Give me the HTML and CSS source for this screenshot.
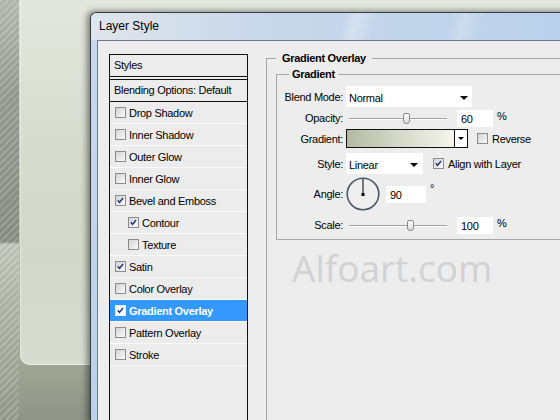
FILE: index.html
```html
<!DOCTYPE html>
<html>
<head>
    <title>Layer Style</title>
    <meta charset="UTF-8">
    <link rel="stylesheet" href="styles.css">
</head>
<body>
    <div class="screen">
        <div class="desk">
            <div class="desk-stripes"></div>
            <div class="desk-main">
                <div class="desk-panel"></div>
            </div>
        </div>

        <div class="window">
            <div class="titlebar">Layer Style</div>
            <div class="frame">
                <div class="client">
                    <div class="styles-list">
                        <div class="list-head">Styles</div>
                        <div class="list-blend">Blending Options: Default</div>
                        <div class="list-item"><span class="cb"></span>Drop Shadow</div>
                        <div class="list-item"><span class="cb"></span>Inner Shadow</div>
                        <div class="list-item"><span class="cb"></span>Outer Glow</div>
                        <div class="list-item"><span class="cb"></span>Inner Glow</div>
                        <div class="list-item"><span class="cb checked"><svg viewBox="0 0 11 11"><path d="M2.2 5.2 L4.3 7.8 L8.6 2.4"/></svg></span>Bevel and Emboss</div>
                        <div class="list-item sub"><span class="cb checked"><svg viewBox="0 0 11 11"><path d="M2.2 5.2 L4.3 7.8 L8.6 2.4"/></svg></span>Contour</div>
                        <div class="list-item sub"><span class="cb"></span>Texture</div>
                        <div class="list-item"><span class="cb checked"><svg viewBox="0 0 11 11"><path d="M2.2 5.2 L4.3 7.8 L8.6 2.4"/></svg></span>Satin</div>
                        <div class="list-item"><span class="cb"></span>Color Overlay</div>
                        <div class="list-item active"><span class="cb checked"><svg viewBox="0 0 11 11"><path d="M2.2 5.2 L4.3 7.8 L8.6 2.4"/></svg></span>Gradient Overlay</div>
                        <div class="list-item"><span class="cb"></span>Pattern Overlay</div>
                        <div class="list-item"><span class="cb"></span>Stroke</div>
                    </div>

                    <div class="settings">
                        <fieldset class="group">
                            <legend>Gradient Overlay</legend>
                            <fieldset class="group inner">
                                <legend>Gradient</legend>

                                <div class="row row-blend">
                                    <span class="label">Blend Mode:</span>
                                    <div class="dd dd-blend">Normal<span class="arrow"></span></div>
                                </div>

                                <div class="row row-opacity">
                                    <span class="label">Opacity:</span>
                                    <div class="slider"><span class="thumb" style="left: 54px"></span></div>
                                    <div class="num">60</div>
                                    <span class="unit">%</span>
                                </div>

                                <div class="row row-gradient">
                                    <span class="label">Gradient:</span>
                                    <div class="grad-box">
                                        <div class="grad-fill"></div>
                                        <div class="grad-btn"><span class="arrow small"></span></div>
                                    </div>
                                    <span class="cb opt-reverse"></span>
                                    <span class="opt-text">Reverse</span>
                                </div>

                                <div class="row row-style">
                                    <span class="label">Style:</span>
                                    <div class="dd dd-style">Linear<span class="arrow"></span></div>
                                    <span class="cb checked opt-align"><svg viewBox="0 0 11 11"><path d="M2.2 5.2 L4.3 7.8 L8.6 2.4"/></svg></span>
                                    <span class="opt-text">Align with Layer</span>
                                </div>

                                <div class="row row-angle">
                                    <span class="label">Angle:</span>
                                    <svg class="dial" width="34" height="34" viewBox="0 0 34 34">
                                        <circle cx="17" cy="17" r="15.8" fill="#efefef" stroke="#4e586b" stroke-width="1.6"/>
                                        <line x1="17" y1="17.5" x2="17" y2="2" stroke="#000" stroke-width="1"/>
                                        <rect x="15.5" y="16" width="3" height="3" fill="#000"/>
                                    </svg>
                                    <div class="num num-angle">90</div>
                                    <span class="degree">°</span>
                                </div>

                                <div class="row row-scale">
                                    <span class="label">Scale:</span>
                                    <div class="slider"><span class="thumb" style="left: 58px"></span></div>
                                    <div class="num">100</div>
                                    <span class="unit">%</span>
                                </div>
                            </fieldset>
                        </fieldset>
                    </div>

                    <div class="watermark">Alfoart.com</div>
                </div>
            </div>
        </div>
    </div>
</body>
</html>
```

FILE: styles.css
```css
body {
    margin: 0;
    width: 560px;
    height: 420px;
    overflow: hidden;
    font-family: 'Liberation Sans', Arial, sans-serif;
    font-size: 11px;
    letter-spacing: -0.3px;
    color: #000;
}

.screen {
    display: flex;
    width: 560px;
    height: 420px;
    overflow: hidden;
    background-color: #e3e7de;
}

/* desktop behind the dialog */

.desk {
    display: flex;
    flex: none;
    width: 90px;
    height: 420px;
}

.desk-stripes {
    width: 19px;
    background:
        repeating-linear-gradient(135deg, rgba(255,255,255,0.13) 0 2px, rgba(0,0,0,0.04) 2px 5px),
        linear-gradient(to bottom, #b9bdb2 0, #9a9e94 90px, #8c9086 242px, #c4c8bc 244px, #aeb2a4 330px, #989d8e 420px);
}

.desk-main {
    flex: 1;
    padding-left: 1px;
    background: linear-gradient(to bottom, #dde1d7 0, #b3b8a8 300px, #a0a596 365px, #8f9486 420px);
}

.desk-panel {
    height: 365px;
    border-bottom-left-radius: 10px;
    background: linear-gradient(to bottom, #e2e6dc 0, #d6dbce 160px, #d3d8cb 260px, #d8ddd2 365px);
    box-shadow: inset 1px 0 0 rgba(255,255,255,0.35), inset 0 -1px 0 rgba(255,255,255,0.5);
}

/* dialog window */

.window {
    display: flex;
    flex-direction: column;
    flex: none;
    width: 480px;
    height: 408px;
    margin-top: 12px;
    border: 1px solid #353c44;
    border-right: none;
    border-bottom: none;
    border-radius: 6px 0 0 0;
    background: linear-gradient(to bottom, #c9d9ec, #bdd0e6);
    box-shadow: -2px 0 6px 1px rgba(0,0,0,0.45);
}

.titlebar {
    height: 27px;
    line-height: 27px;
    padding-left: 8px;
    font-size: 12px;
    letter-spacing: 0;
    border-radius: 6px 0 0 0;
    background:
        linear-gradient(105deg, transparent 0 52%, rgba(255,255,255,0.28) 55%, transparent 59%, transparent 74%, rgba(255,255,255,0.22) 77%, transparent 81%),
        linear-gradient(to right, #dfe5ec 0, #c9d8ea 35%, #bad0ea 100%);
}

.frame {
    flex: 1;
    display: flex;
    padding-left: 6px;
}

.client {
    position: relative;
    flex: 1;
    display: flex;
    padding-left: 11px;
    border-left: 1px solid #6f7d8e;
    border-top: 1px solid #6f7d8e;
    background-color: #ededed;
}

/* styles list */

.styles-list {
    flex: none;
    width: 139px;
    margin-top: 13px;
    box-sizing: border-box;
    border: 1px solid #111;
    border-bottom: none;
    background-color: #ececec;
}

.list-head {
    height: 21px;
    line-height: 20px;
    padding-left: 4px;
    border-bottom: 1px solid #111;
}

.list-blend {
    height: 21px;
    line-height: 21px;
    padding-left: 4px;
    margin-top: 2px;
    border-top: 1px solid #111;
    border-bottom: 1px solid #111;
}

.list-item {
    display: flex;
    align-items: center;
    gap: 3px;
    height: 21px;
    padding-left: 5px;
    border-bottom: 1px solid #fafafa;
}

.list-item.sub {
    padding-left: 18px;
}

.list-item.active {
    background-color: #3399ff;
    color: white;
    font-weight: bold;
}

.cb {
    display: inline-block;
    flex: none;
    width: 11px;
    height: 11px;
    box-sizing: border-box;
    border: 1px solid #8c8c8c;
    background: linear-gradient(135deg, #d3d3d3, #fbfbfb);
}

.cb svg {
    display: block;
    width: 9px;
    height: 9px;
}

.cb path {
    fill: none;
    stroke: #1d2f78;
    stroke-width: 1.7;
}

.active .cb {
    border-color: #e8eef8;
    background: #fff;
}

/* settings panel */

.settings {
    flex: 1;
    display: flex;
    flex-direction: column;
    margin: 10px 0 0 18px;
}

.group {
    margin: 0;
    padding: 2px 0 0 9px;
    border: 1px solid #a6a6a6;
    border-bottom: none;
    border-right: none;
    min-width: 0;
}

.settings > .group {
    flex: 1;
}

.group legend {
    padding: 0 6px;
    line-height: 14px;
    font-weight: bold;
}

.group.inner {
    padding: 5px 0 3px 0;
    border-bottom: 1px solid #a6a6a6;
}

.group.inner legend {
    margin-left: 12px;
    padding: 0 3px;
}

.row {
    display: flex;
    align-items: center;
}

.label {
    flex: none;
    width: 66px;
    margin-right: 3px;
    text-align: right;
}

.row-blend { height: 21px; }
.row-opacity { height: 22px; }
.row-gradient { height: 19px; }
.row-style { height: 21px; margin-top: 5px; }
.row-angle { height: 34px; margin-top: 3px; }
.row-scale { height: 22px; margin-top: 3px; }

.dd {
    display: flex;
    align-items: center;
    height: 21px;
    padding: 2px 0 0 3px;
    box-sizing: border-box;
    background-color: white;
}

.dd-blend { width: 126px; }
.dd-style { width: 77px; }

.arrow {
    margin-left: auto;
    margin-right: 4px;
    width: 0;
    height: 0;
    border-left: 4px solid transparent;
    border-right: 4px solid transparent;
    border-top: 4px solid #000;
}

.dd-style .arrow {
    margin-right: 5px;
}

.arrow.small {
    margin: 0;
    border-left-width: 3px;
    border-right-width: 3px;
    border-top-width: 3px;
}

.slider {
    position: relative;
    width: 98px;
    height: 11px;
    margin-left: 3px;
}

.slider::before {
    content: "";
    position: absolute;
    left: 0;
    right: 0;
    top: 5px;
    border-top: 1px solid #a2a2a2;
    border-bottom: 1px solid #fff;
}

.thumb {
    position: absolute;
    top: 0;
    width: 7px;
    height: 11px;
    box-sizing: border-box;
    border: 1px solid #8a8a8a;
    border-radius: 2px 2px 3px 3px;
    background: linear-gradient(to bottom, #fff, #dadada);
}

.num {
    width: 36px;
    height: 17px;
    line-height: 18px;
    margin-left: 10px;
    padding-left: 4px;
    box-sizing: border-box;
    background-color: white;
}

.unit {
    margin-left: 4px;
    margin-top: -4px;
}

.grad-box {
    display: flex;
    width: 122px;
    height: 19px;
    box-sizing: border-box;
    border: 1px solid #111;
}

.grad-fill {
    flex: 1;
    background: linear-gradient(to right, #b2baa4 0, #d3d7c6 45%, #f5f5ec 100%);
}

.grad-btn {
    display: flex;
    align-items: center;
    justify-content: center;
    width: 12px;
    border-left: 1px solid #111;
    background-color: white;
}

.opt-reverse {
    margin-left: 9px;
}

.opt-align {
    margin-left: 10px;
}

.opt-text {
    margin-left: 4px;
}

.dial {
    display: block;
    flex: none;
}

.num-angle {
    width: 40px;
    margin-left: 6px;
}

.degree {
    align-self: flex-start;
    margin: 5px 0 0 4px;
}

.watermark {
    position: absolute;
    left: 194px;
    top: 208px;
    font-family: 'Open Sans', sans-serif;
    font-size: 37px;
    line-height: 37px;
    letter-spacing: 0;
    color: #d2d2d2;
}
```
